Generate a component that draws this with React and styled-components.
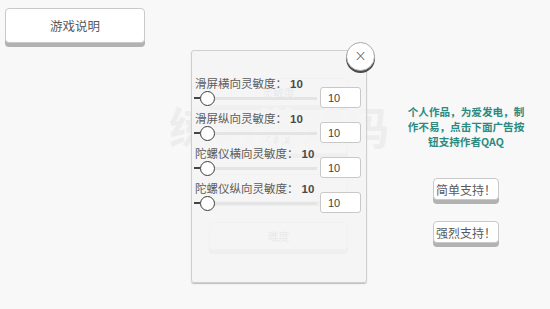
import React from 'react';
import styled, { createGlobalStyle } from 'styled-components';

const GlobalStyle = createGlobalStyle`
  html, body { margin: 0; padding: 0; }
  body {
    background: #f8f8f8;
    font-family: "Noto Sans CJK SC", "Liberation Sans", sans-serif;
  }
`;

const Screen = styled.div`
  position: relative;
  width: 550px;
  height: 309px;
  overflow: hidden;
  display: grid;
  grid-template-columns: 191px 175px 1fr;
  background: #f8f8f8;
`;

const LeftCol = styled.div`
  padding: 8px 0 0 5px;
`;

const MenuButton = styled.button`
  display: flex;
  align-items: center;
  justify-content: center;
  box-sizing: border-box;
  width: ${p => p.$w}px;
  height: ${p => p.$h}px;
  background: #fff;
  border: 1px solid #c9c9c9;
  border-radius: 4px;
  box-shadow: 0 4px 0 #b2b2b2;
  color: #5a5a5a;
  font-family: inherit;
  font-size: ${p => p.$fs || 12}px;
  padding: 0;
`;

const CenterCol = styled.div`
  position: relative;
  display: flex;
  flex-direction: column;
  align-items: center;
  gap: 20px;
  padding-top: 78px;
`;

const Watermark = styled.div`
  position: absolute;
  left: -22px;
  top: 104px;
  width: 220px;
  font-size: 44px;
  font-weight: bold;
  line-height: 1;
  color: #ededed;
  white-space: nowrap;
`;

const RightCol = styled.div`
  display: flex;
  flex-direction: column;
  align-items: center;
  padding: 104px 0 0 16px;
`;

const Notice = styled.p`
  margin: 0 0 29px;
  width: 120px;
  font-size: 10.6px;
  line-height: 15px;
  font-weight: bold;
  color: #2c8a80;
  text-align: center;
`;

const SupportList = styled.div`
  display: flex;
  flex-direction: column;
  gap: 21px;
`;

const Overlay = styled.div`
  position: absolute;
  left: 191px;
  top: 50px;
  box-sizing: border-box;
  width: 176px;
  height: 233px;
  background: rgba(244, 244, 244, 0.92);
  border: 1px solid #cfcfcf;
  border-radius: 3px;
  box-shadow: 0 1px 1px #bdbdbd;
  padding: 25px 5px 0 2px;
  display: flex;
  flex-direction: column;
  gap: 6px;
`;

const CloseButton = styled.button`
  position: absolute;
  right: -9px;
  top: -9px;
  width: 29px;
  height: 29px;
  border-radius: 50%;
  background: #fff;
  border: 1px solid #aaa;
  box-shadow: 0 2px 0 #4a4a4a;
  color: #666;
  font-size: 15px;
  font-weight: 300;
  line-height: 1;
  padding: 0;
  display: flex;
  align-items: center;
  justify-content: center;
  font-family: "DejaVu Sans", sans-serif;
`;

const Setting = styled.div`
  display: grid;
  grid-template-columns: 1fr 41px;
  grid-template-rows: 15px 14px;
  height: 29px;
`;

const Label = styled.div`
  grid-column: 1 / 3;
  grid-row: 1;
  font-size: 11.5px;
  line-height: 15px;
  color: #5c5c5c;
  margin-left: 1px;
  white-space: nowrap;
`;

const Value = styled.span`
  margin-left: 3px;
  font-family: "Liberation Sans", sans-serif;
  font-weight: bold;
  color: #4a4a4a;
`;

const Slider = styled.div`
  grid-column: 1;
  grid-row: 2;
  display: flex;
  align-items: center;
`;

const Stub = styled.div`
  width: 6px;
  height: 1.5px;
  background: #444;
`;

const Thumb = styled.div`
  box-sizing: border-box;
  width: 15px;
  height: 15px;
  border-radius: 50%;
  border: 1.5px solid #3c3c3c;
  background: #fff;
  flex: none;
`;

const Track = styled.div`
  flex: 1;
  height: 3px;
  background: #e4e4e4;
  margin-right: 3px;
`;

const NumberInput = styled.input`
  grid-column: 2;
  grid-row: 1 / 3;
  align-self: start;
  box-sizing: border-box;
  width: 41px;
  height: 21px;
  border: 1px solid #c8c8c8;
  border-radius: 3px;
  background: #fff;
  font-family: "Liberation Sans", sans-serif;
  font-size: 11px;
  color: #444;
  padding: 0 0 0 7px;
  margin-top: 11px;
  outline: none;
`;

const settings = ['滑屏横向灵敏度', '滑屏纵向灵敏度', '陀螺仪横向灵敏度', '陀螺仪纵向灵敏度'];

export default function App() {
  return (
    <>
      <GlobalStyle />
      <Screen>
        <LeftCol>
          <MenuButton $w={140} $h={35} $fs={12.5}>游戏说明</MenuButton>
        </LeftCol>
        <CenterCol>
          <Watermark>练习游戏码</Watermark>
          {['灵敏度', '控制器', '声音', '难度'].map(t => (
            <MenuButton key={t} $w={139} $h={28} $fs={11}>{t}</MenuButton>
          ))}
        </CenterCol>
        <RightCol>
          <Notice>个人作品，为爱发电，制作不易，点击下面广告按钮支持作者QAQ</Notice>
          <SupportList>
            <MenuButton $w={66} $h={22}>简单支持！</MenuButton>
            <MenuButton $w={66} $h={22}>强烈支持！</MenuButton>
          </SupportList>
        </RightCol>
        <Overlay>
          <CloseButton>×</CloseButton>
          {settings.map(s => (
            <Setting key={s}>
              <Label>{s}：<Value>10</Value></Label>
              <Slider>
                <Stub />
                <Thumb />
                <Track />
              </Slider>
              <NumberInput defaultValue="10" />
            </Setting>
          ))}
        </Overlay>
      </Screen>
    </>
  );
}
